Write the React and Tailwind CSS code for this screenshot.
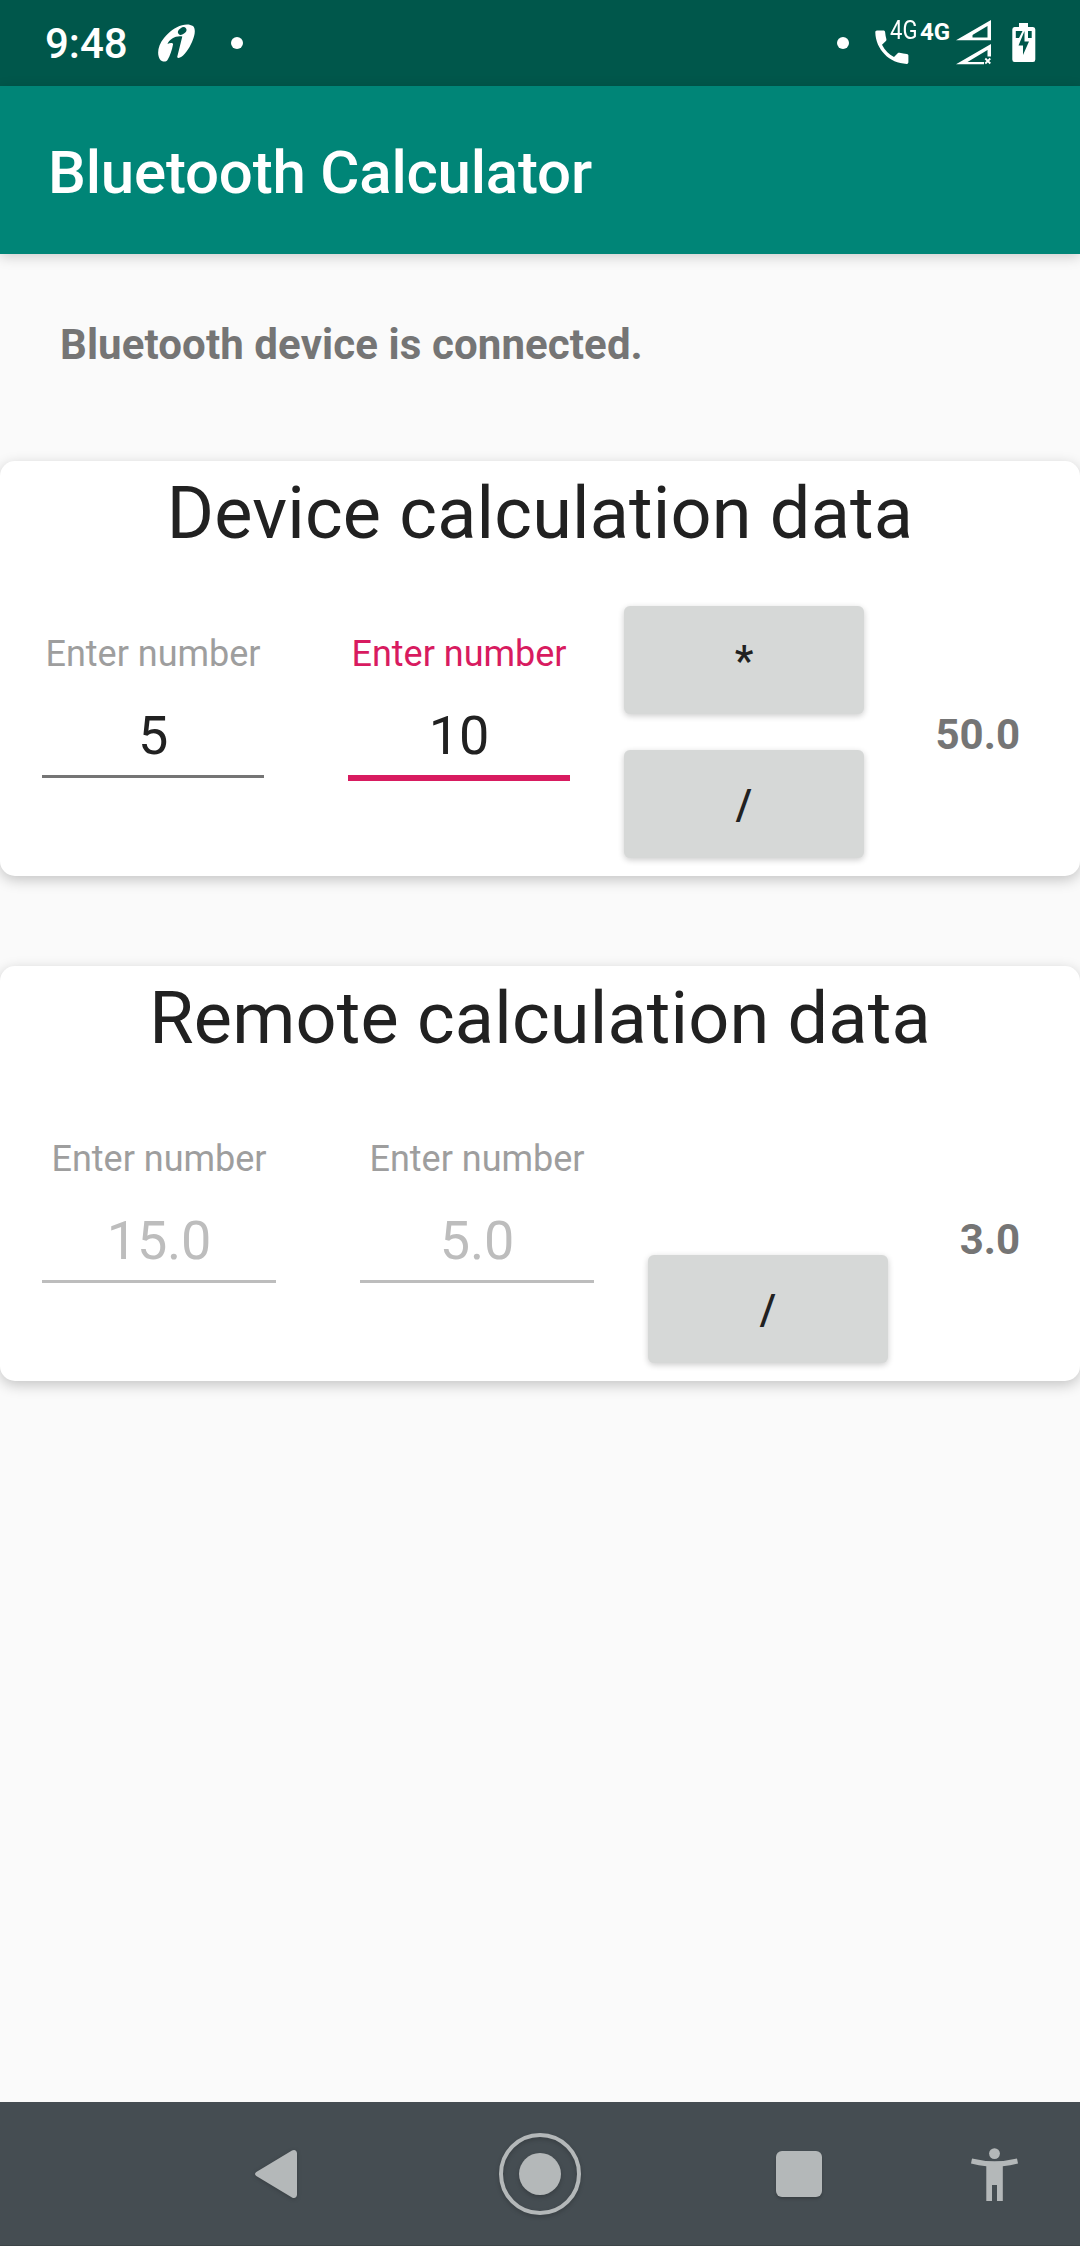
function CarrierIcon() {
  return (
    <svg width="37" height="38" viewBox="0 0 37 38" fill="#fff">
      <path d="M24 1.200C28 0 32 0 35 2C38 5 37 11 34 18C31 25 26 32 22 33.600C20.500 34.200 19.500 34 19.200 33L24.300 12.500C19 11 11 15 9.500 20C12 18.500 15.500 18.500 15 20.500C14 26 12 32 9.500 36C8 38.200 4 38 2 35.500C-1.500 30 0 21 6 14C11 8 17 3 24 1.200Z" />
      <ellipse cx="24.200" cy="7" rx="4.600" ry="3.200" transform="rotate(-35 24.200 7)" fill="#00574B" />
    </svg>
  );
}

function CallIcon() {
  return (
    <svg width="34" height="35" viewBox="0 0 34 35" fill="#fff">
      <path d="M2 .5H8.300C9.400 .5 9.900 1 10.100 2C10.300 4.500 10.800 7 11.400 9.200C11.600 9.900 11.400 10.500 10.900 11L7 14.800C10 20.500 13.700 24.200 19 27L22.700 23.200C23.300 22.700 23.900 22.600 24.600 22.800C27 23.500 29.500 23.900 31.800 24C32.900 24.100 33.400 24.600 33.400 25.600V32C33.400 33.200 32.800 33.900 31.700 33.900C14.500 33.500 .7 19.500 .3 2.300C.3 1.200 .9 .5 2 .5Z" />
    </svg>
  );
}

function SignalIcons() {
  return (
    <svg width="36" height="46" viewBox="0 0 36 46" fill="#fff">
      <path fillRule="evenodd" d="M35 0V20.300H0ZM31.500 6L16 15.300V17.500H31.500Z" />
      <rect x="14.500" y="12" width="2" height="6" />
      <path fillRule="evenodd" d="M35 24V36.500H31.500V30L11.500 42H28V44.300H0Z" />
      <path d="M29.300 38.500L34.300 43.500M34.300 38.500L29.300 43.500" stroke="#fff" strokeWidth="1.800" />
    </svg>
  );
}

function BatteryIcon() {
  return (
    <svg width="24" height="40" viewBox="0 0 24 40">
      <path fill="#fff" d="M7 0H16V4H21Q23.300 4 23.300 6.500V36.500Q23.300 39 21 39H2.500Q.3 39 .3 36.500V6.500Q.3 4 2.500 4H7Z" />
      <path fill="#00574B" d="M3.800 8H10.500L7 15H3.800ZM16 8H19.700V15H16Z" />
      <path fill="#00574B" d="M12.500 8V18.500H17L11 32V22.500H6.500Z" />
    </svg>
  );
}

function StatusBar() {
  return (
    <header className="flex h-[86px] items-center bg-[#00574B] text-white">
      <span className="ml-[45px] w-[83px] pt-[2px] text-[42px] leading-[84px] font-medium">9:48</span>
      <span className="ml-[30px]"><CarrierIcon /></span>
      <span className="ml-9 size-3 rounded-full bg-white" />
      <span className="ml-auto size-3 rounded-full bg-white" />
      <span className="relative ml-[26px] w-[34px] pt-2">
        <CallIcon />
        <span className="absolute top-[-7px] left-[15px] origin-left scale-x-[0.85] text-[26px] leading-[30px]">4G</span>
      </span>
      <span className="mr-[6px] ml-[11px] w-[30px] pb-[22px] text-[24px] leading-[30px] font-bold">4G</span>
      <SignalIcons />
      <span className="mr-[44px] ml-5"><BatteryIcon /></span>
    </header>
  );
}

const fieldTones = {
  idle: { label: "text-[#9e9e9e]", value: "text-[#212121]", line: "h-[3px] bg-[#757575]" },
  active: { label: "text-[#D81B60]", value: "text-[#212121]", line: "h-[6px] bg-[#D81B60]" },
  disabled: { label: "text-[#9e9e9e]", value: "text-[#bdbdbd]", line: "h-[3px] bg-[#bdbdbd]" },
};

function NumberField({ value, tone }) {
  const t = fieldTones[tone];
  return (
    <div className="min-w-0 flex-1 pt-[67px] text-center">
      <div className={`text-[36px] leading-[42px] whitespace-nowrap ${t.label}`}>Enter number</div>
      <div className={`mt-[21px] text-[54px] leading-[79px] tracking-[-0.2px] ${t.value}`}>{value}</div>
      <div className={t.line} />
    </div>
  );
}

function OperatorButton({ children }) {
  return (
    <button className="h-[108px] w-[240px] rounded-[6px] bg-[#d6d8d7] pt-[2px] text-[42px] leading-[106px] font-medium text-[#212121] shadow-[0_2px_6px_rgba(0,0,0,0.2)]">
      {children}
    </button>
  );
}

function CalculationCard({ title, fields, operators, result, resultWidth }) {
  return (
    <section className="h-[415px] rounded-[15px] bg-white shadow-[0_4px_14px_rgba(0,0,0,0.22)]">
      <h2 className="text-center text-[72px] leading-[105px] tracking-[0.2px] text-[#212121]">{title}</h2>
      <div className="flex h-[310px] pr-[60px] pl-[42px]">
        <div className="flex flex-1 gap-[84px]">
          {fields.map((field, i) => (
            <NumberField key={i} {...field} />
          ))}
        </div>
        <div className="ml-[54px] flex flex-col justify-end gap-9 pb-[18px]">
          {operators.map((op) => (
            <OperatorButton key={op}>{op}</OperatorButton>
          ))}
        </div>
        <div className={`pt-[129px] text-right text-[42px] leading-[80px] font-bold text-[#757575] ${resultWidth}`}>
          {result}
        </div>
      </div>
    </section>
  );
}

function NavigationBar() {
  return (
    <nav className="flex h-[144px] items-center border-b border-[#3d4448] bg-[#454d52] text-[#b4b8b9]">
      <svg className="ml-[255px] drop-shadow-[0_1px_2px_rgba(0,0,0,0.2)]" width="42" height="48" viewBox="0 0 42 48" fill="currentColor">
        <path d="M1.300 22L37 .6C39.500 -.7 42 .5 42 3.500V44.500C42 47.500 39.500 48.700 37 47.400L1.300 26C-.4 25 -.4 23 1.300 22Z" />
      </svg>
      <span className="ml-[202px] flex size-[82px] items-center justify-center rounded-full border-[4.500px] border-[#b4b8b9] drop-shadow-[0_2px_2px_rgba(0,0,0,0.2)]">
        <span className="size-[42px] shrink-0 rounded-full bg-current" />
      </span>
      <span className="ml-[195px] size-[46px] rounded-[6px] bg-current shadow-[0_2px_3px_rgba(0,0,0,0.2)]" />
      <svg className="mt-[2px] ml-[149px]" width="48" height="54" viewBox="0 0 48 54" fill="currentColor">
        <circle cx="23.500" cy="5.600" r="5.400" />
        <path d="M1 10.500Q23.500 16 46 10.500L47 15.500Q39 17.500 31.800 18.300V53H26V37H21V53H15.300V18.300Q8 17.500 0 15.500Z" />
      </svg>
    </nav>
  );
}

export default function App() {
  return (
    <div className="flex h-[2246px] w-[1080px] flex-col overflow-hidden bg-[#fafafa] font-[Roboto,sans-serif]">
      <StatusBar />
      <div className="h-[168px] bg-[#008577] pt-[5px] pl-12 text-[60px] leading-[163px] font-medium tracking-[-0.200px] text-white shadow-[0_3px_12px_rgba(0,0,0,0.18)]">
        Bluetooth Calculator
      </div>
      <main className="flex-1">
        <p className="h-[207px] pt-[61px] pl-[60px] text-[42px] leading-[60px] font-bold tracking-[0.100px] text-[#757575]">
          Bluetooth device is connected.
        </p>
        <div className="flex flex-col gap-[90px]">
          <CalculationCard
            title="Device calculation data"
            fields={[{ value: "5", tone: "idle" }, { value: "10", tone: "active" }]}
            operators={["*", "/"]}
            result="50.0"
            resultWidth="w-[156px]"
          />
          <CalculationCard
            title="Remote calculation data"
            fields={[{ value: "15.0", tone: "disabled" }, { value: "5.0", tone: "disabled" }]}
            operators={["/"]}
            result="3.0"
            resultWidth="w-[132px]"
          />
        </div>
      </main>
      <NavigationBar />
    </div>
  );
}
